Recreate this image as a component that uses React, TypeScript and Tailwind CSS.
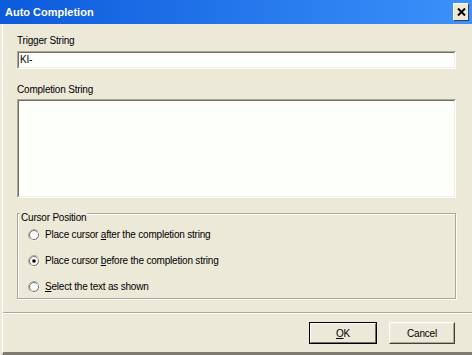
import React from 'react';

const Radio: React.FC<{ checked?: boolean }> = ({ checked }) => (
  <svg width="12" height="12" viewBox="0 0 12 12" className="shrink-0">
    <circle cx="6" cy="6" r="5.5" fill="#ffffff" stroke="#ACA899" />
    <path d="M10.2 2.4 A5.5 5.5 0 0 1 2.4 10.2" fill="none" stroke="#ffffff" />
    <circle cx="6" cy="6" r="4.5" fill="#ffffff" stroke="#716F64" />
    <path d="M9.2 3.2 A4.5 4.5 0 0 1 3.2 9.2" fill="none" stroke="#F1EFE2" />
    {checked && <circle cx="6" cy="6" r="1.8" fill="#000000" />}
  </svg>
);

const Field: React.FC<{ className?: string; children?: React.ReactNode }> = ({ className, children }) => (
  <div className={`border border-t-[#ACA899] border-l-[#ACA899] border-b-white border-r-white ${className ?? ''}`}>
    <div className="h-full border border-t-[#716F64] border-l-[#716F64] border-b-[#F1EFE2] border-r-[#F1EFE2] bg-[#FDFFFB] pl-[1px] leading-[14px]">
      {children}
    </div>
  </div>
);

const App: React.FC = () => {
  return (
    <div className="w-[472px] h-[355px] bg-[#ECE9D8] flex flex-col overflow-hidden font-['Liberation_Sans',Arial,sans-serif] text-[10px] text-black">
      {/* Title bar */}
      <div className="h-[24px] shrink-0 bg-linear-to-r from-[#0A5ADB] to-[#3C91FA] flex items-center pl-[5px] pr-[3px]">
        <span className="text-white font-bold text-[11px] leading-[14px] flex-1">Auto Completion</span>
        <div className="w-[16px] h-[18px] border border-t-white border-l-white border-b-[#404040] border-r-[#404040] bg-[#ECE9D8] flex items-center justify-center">
          <svg width="9" height="8" viewBox="0 0 9 8">
            <path d="M1 0.5 L8 7.5 M8 0.5 L1 7.5" stroke="#000" strokeWidth="2" />
          </svg>
        </div>
      </div>

      {/* Body */}
      <div className="flex-1 flex flex-col ml-[2px] border-l border-white border-b-[3px] border-b-[#7E7B70] tracking-[-0.2px]">
        <div className="pl-[14px] flex flex-col w-[453px]">
          <div className="mt-[11px] leading-[12px]">Trigger String</div>
          <Field className="mt-[4px] h-[18px]">KI-</Field>

          <div className="mt-[15px] leading-[12px]">Completion String</div>
          <Field className="mt-[3px] h-[99px]" />

          {/* Group box */}
          <div className="relative mt-[15px] h-[86px] border border-[#ACA899] shadow-[inset_1px_1px_0_#ffffff,1px_1px_0_#ffffff] pt-[15px] pl-[10px] flex flex-col gap-[14px] leading-[12px]">
            <span className="absolute left-[2px] top-[-2px] bg-[#ECE9D8] px-[1px] leading-[12px]">Cursor Position</span>
            <label className="flex items-center gap-[5px]">
              <Radio />
              <span>Place cursor <u>a</u>fter the completion string</span>
            </label>
            <label className="flex items-center gap-[5px]">
              <Radio checked />
              <span>Place cursor <u>b</u>efore the completion string</span>
            </label>
            <label className="flex items-center gap-[5px]">
              <Radio />
              <span><u>S</u>elect the text as shown</span>
            </label>
          </div>
        </div>

        {/* Separator */}
        <div className="mt-[13px] h-[2px] border-t border-[#ACA899] border-b border-b-white" />

        {/* Buttons */}
        <div className="mt-[8px] flex pl-[306px] gap-[12px]">
          <button className="w-[68px] h-[22px] border border-black bg-[#ECE9D8]">
            <div className="h-full border border-t-white border-l-white border-b-[#716F64] border-r-[#716F64] flex items-center justify-center">
              <span><u>O</u>K</span>
            </div>
          </button>
          <button className="w-[66px] h-[22px] border border-t-white border-l-white border-b-[#404040] border-r-[#404040] bg-[#ECE9D8]">
            <div className="h-full border border-t-[#F1EFE2] border-l-[#F1EFE2] border-b-[#ACA899] border-r-[#ACA899] flex items-center justify-center">
              Cancel
            </div>
          </button>
        </div>
      </div>
    </div>
  );
};

export default App;
